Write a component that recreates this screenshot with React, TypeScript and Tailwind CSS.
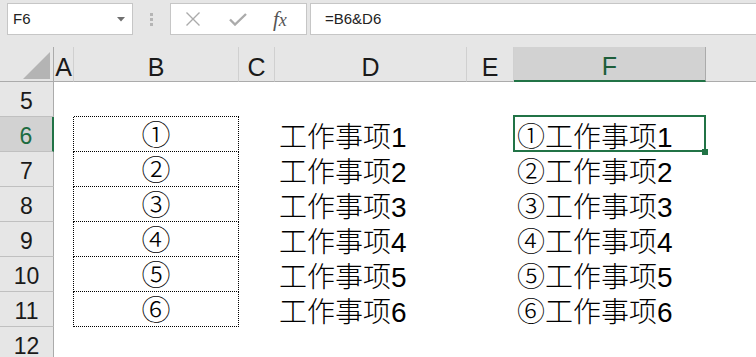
import React from 'react';

const GRID = 'grid grid-cols-[54px_20px_165px_36px_192px_47px_192px_1fr]';
const SANS = "font-['Liberation_Sans','Noto_Sans_CJK_SC',sans-serif]";

const circled = ['①', '②', '③', '④', '⑤', '⑥'];

const TopBar = () => (
  <div className={`flex h-[47px] items-start bg-[#e6e6e6] pt-[3px] pl-[7px] ${SANS}`}>
    {/* name box */}
    <div className="flex h-[32px] w-[126px] items-center justify-between border border-[#c6c6c6] bg-white pl-[5px] pr-[7px] text-[15px] text-[#222]">
      <span>F6</span>
      <svg width="8" height="5" viewBox="0 0 8 5">
        <path d="M0 0 L8 0 L4 4.5 Z" fill="#6f6f6f" />
      </svg>
    </div>
    {/* grip dots */}
    <div className="flex h-[32px] w-[37px] flex-col items-center justify-center gap-[2px]">
      <div className="h-[3px] w-[3px] bg-[#b5b5b5]" />
      <div className="h-[3px] w-[3px] bg-[#b5b5b5]" />
      <div className="h-[3px] w-[3px] bg-[#b5b5b5]" />
    </div>
    {/* cancel / enter / fx */}
    <div className="flex h-[32px] w-[137px] items-center border border-[#c6c6c6] bg-white pl-[14px]">
      <svg width="16" height="14" viewBox="0 0 16 14" className="mr-[28px]">
        <path d="M1.5 0.5 L14.5 13.5 M14.5 0.5 L1.5 13.5" stroke="#ababab" strokeWidth="1.4" />
      </svg>
      <svg width="18" height="13" viewBox="0 0 18 13" className="mr-[26px]">
        <path d="M1 6.5 L6 11.5 L17 1" stroke="#ababab" strokeWidth="2.4" fill="none" />
      </svg>
      <span className="font-['Liberation_Serif',serif] text-[21px] italic leading-none text-[#555]">
        f<span className="text-[18px]">x</span>
      </span>
    </div>
    {/* formula input */}
    <div className="ml-[3px] flex h-[32px] flex-1 items-center border-y border-l border-[#c6c6c6] bg-white pl-[14px] text-[15px] text-[#222]">
      =B6&amp;D6
    </div>
  </div>
);

const ColHeader = ({ label, selected, last }: { label: string; selected?: boolean; last?: boolean }) => (
  <div
    className={`flex items-end justify-center overflow-visible pb-[1px] text-[25px] leading-none ${
      selected
        ? 'border-r border-b-2 border-r-[#ababab] border-b-[#217346] bg-[#d2d2d2] text-[#1d5e3a]'
        : `${last ? '' : 'border-r border-r-[#d0d0d0]'} border-b border-b-[#ababab] text-[#1a1a1a]`
    }`}
  >
    {label}
  </div>
);

export default function App() {
  const rows = [5, 6, 7, 8, 9, 10, 11, 12];
  return (
    <div className={`h-screen w-full overflow-hidden bg-white ${SANS}`}>
      <TopBar />
      <div className={`${GRID} bg-[#e6e6e6]`}>
        {/* corner */}
        <div className="flex h-[35px] items-end justify-end border-r border-b border-r-[#ababab] border-b-[#ababab] pr-[3px] pb-[2px]">
          <svg width="27" height="27" viewBox="0 0 27 27">
            <path d="M27 0 L27 27 L0 27 Z" fill="#b4b4b4" />
          </svg>
        </div>
        <ColHeader label="A" />
        <ColHeader label="B" />
        <ColHeader label="C" />
        <ColHeader label="D" />
        <ColHeader label="E" />
        <ColHeader label="F" selected />
        <ColHeader label="" last />
      </div>
      <div className={GRID}>
        {rows.map((r) => {
          const i = r - 6;
          const inList = r >= 6 && r <= 11;
          const sel = r === 6;
          return (
            <React.Fragment key={r}>
              <div
                className={`flex h-[35px] items-end justify-center border-b border-b-[#c0c0c0] pb-[3px] text-[23px] leading-none ${
                  sel
                    ? 'border-r-2 border-r-[#217346] bg-[#d2d2d2] text-[#1d6b40]'
                    : 'border-r border-r-[#ababab] bg-[#e6e6e6] text-[#1a1a1a]'
                }`}
              >
                {r}
              </div>
              {/* A */}
              <div className={inList ? 'border-r border-dotted border-black' : ''} />
              {/* B */}
              <div
                className={`flex items-end justify-center text-[29px] font-light leading-none text-black ${
                  inList ? 'border-r border-b border-dotted border-black' : ''
                } ${r === 5 ? 'border-b border-dotted border-black' : ''}`}
              >
                {inList ? circled[i] : ''}
              </div>
              {/* C */}
              <div />
              {/* D */}
              <div className="flex items-end whitespace-nowrap pl-[4px] text-[28px] font-light leading-none text-black">
                {inList ? `工作事项${i + 1}` : ''}
              </div>
              {/* E */}
              <div />
              {/* F */}
              <div className="relative flex items-end whitespace-nowrap pl-[3px] text-[28px] font-light leading-none text-black">
                {inList ? `${circled[i]}工作事项${i + 1}` : ''}
                {sel && (
                  <>
                    <div className="absolute -top-[2px] -left-[1px] right-0 bottom-0 border-2 border-[#217346]" />
                    <div className="absolute -right-[2px] -bottom-[3px] h-[6px] w-[6px] bg-[#217346]" />
                  </>
                )}
              </div>
              <div />
            </React.Fragment>
          );
        })}
      </div>
    </div>
  );
}
